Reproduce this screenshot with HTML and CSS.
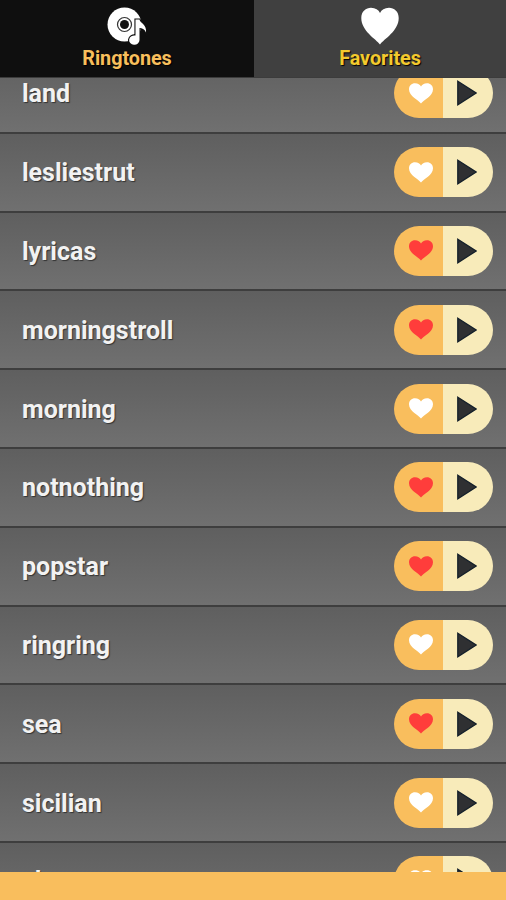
FILE: index.html
```html
<!DOCTYPE html>
<html lang="en">
<head>
<meta charset="utf-8">
<title>Ringtones</title>
<link rel="stylesheet" href="styles.css">
</head>
<body>
<svg width="0" height="0" class="defs">
  <symbol id="heart" viewBox="0 0 24 21"><path d="M12 20.500C9.500 17 0 13.500 0 6.300C0 2.600 2.600 .2 6 .2C9 .2 11 1.500 12 3.500C13 1.500 15 .2 18 .2C21.400 .2 24 2.600 24 6.300C24 13.500 14.500 17 12 20.500Z"/></symbol>
  <symbol id="play" viewBox="0 0 20 26"><path d="M.8 1.200L19 13L.8 24.800Z" fill="#2f3032" stroke="#15202a" stroke-width="1.300"/></symbol>
</svg>
<div class="app">
  <nav class="tabs">
    <div class="tab active">
      <svg class="disc" viewBox="0 0 40 38">
        <circle cx="17.500" cy="17.500" r="17" fill="#fff"/>
        <circle cx="17.500" cy="17.500" r="7" fill="none" stroke="#333" stroke-width="1.200"/>
        <circle cx="17.500" cy="17.500" r="4.500" fill="#111"/>
        <path d="M28.500 12.500H32.500C33 16 40 17.500 39 25.500C37.500 22 35 21 32.500 21V33A5.200 4.600 0 1 1 28.500 28.600Z" fill="#fff" stroke="#111" stroke-width="2.200" paint-order="stroke"/>
      </svg>
      <span>Ringtones</span>
    </div>
    <div class="tab favorites">
      <svg class="bigheart" viewBox="0 0 38 38"><path d="M19 37.500C15 32 .3 24 .3 11C.3 4.500 5 .8 10 .8C14.500 .8 17.500 3 19 6C20.500 3 23.500 .8 28 .8C33 .8 37.700 4.500 37.700 11C37.700 24 23 32 19 37.500Z" fill="#fff"/></svg>
      <span>Favorites</span>
    </div>
  </nav>
  <main class="viewport">
    <ul class="list">
      <li><span>land</span><div class="pill"><i><svg><use href="#heart"/></svg></i><b><svg><use href="#play"/></svg></b></div></li>
      <li><span>lesliestrut</span><div class="pill"><i><svg><use href="#heart"/></svg></i><b><svg><use href="#play"/></svg></b></div></li>
      <li><span>lyricas</span><div class="pill liked"><i><svg><use href="#heart"/></svg></i><b><svg><use href="#play"/></svg></b></div></li>
      <li><span>morningstroll</span><div class="pill liked"><i><svg><use href="#heart"/></svg></i><b><svg><use href="#play"/></svg></b></div></li>
      <li><span>morning</span><div class="pill"><i><svg><use href="#heart"/></svg></i><b><svg><use href="#play"/></svg></b></div></li>
      <li><span>notnothing</span><div class="pill liked"><i><svg><use href="#heart"/></svg></i><b><svg><use href="#play"/></svg></b></div></li>
      <li><span>popstar</span><div class="pill liked"><i><svg><use href="#heart"/></svg></i><b><svg><use href="#play"/></svg></b></div></li>
      <li><span>ringring</span><div class="pill"><i><svg><use href="#heart"/></svg></i><b><svg><use href="#play"/></svg></b></div></li>
      <li><span>sea</span><div class="pill liked"><i><svg><use href="#heart"/></svg></i><b><svg><use href="#play"/></svg></b></div></li>
      <li><span>sicilian</span><div class="pill"><i><svg><use href="#heart"/></svg></i><b><svg><use href="#play"/></svg></b></div></li>
      <li class="partial"><span>sl</span><div class="pill"><i><svg><use href="#heart"/></svg></i><b><svg><use href="#play"/></svg></b></div></li>
    </ul>
  </main>
  <footer class="banner"></footer>
</div>
</body>
</html>
```
FILE: styles.css
```css
* { box-sizing: border-box; }
body { margin: 0; font-family: Roboto, sans-serif; background: #666; }
.defs { display: none; }
.app { height: 900px; width: 506px; display: flex; flex-direction: column; overflow: hidden; }
.tabs { height: 78px; flex: none; display: grid; grid-template-columns: 254px 252px; border-bottom: 1px solid #3c3c3c; }
.tab { display: flex; flex-direction: column; align-items: center; background: #404040; padding-top: 7px; }
.tab.active { background: #0f0f0f; }
.tab span { font-weight: 700; font-size: 19.8px; line-height: 24px; color: #f8bf5c; text-shadow: 1px 1px 1px #000; letter-spacing: -.05px; }
.tab.favorites span { color: #f3ca2e; }
.disc { width: 40px; height: 38px; margin-bottom: 2px; }
.bigheart { width: 38px; height: 38px; margin-bottom: 2px; }
.viewport { flex: 1; min-height: 0; overflow: hidden; }
.list { list-style: none; margin: -23px 0 0; padding: 0; }
.list li { height: 78.800px; display: flex; align-items: center; justify-content: space-between; padding: 0 13px 0 22px; background: linear-gradient(#5f5f5f, #707070); border-bottom: 2px solid #3e3e3e; }
.list span { font-weight: 700; font-size: 25px; line-height: 30px; color: #f2f2f2; text-shadow: 1px 1px 1px #333; padding-top: 2px; }
.list .partial span { padding: 0; }
.list .partial .pill { margin-top: -1px; }
.pill { width: 99px; height: 50px; border-radius: 25px; overflow: hidden; display: grid; grid-template-columns: 49px 50px; }
.pill i, .pill b { display: flex; align-items: center; }
.pill i { background: #f9be5d; padding-left: 15px; }
.pill b { background: #f8ebba; padding-left: 14px; }
.pill i svg { width: 24px; height: 21px; fill: #fff; }
.pill.liked i svg { fill: #ff3d3b; }
.pill b svg { width: 20px; height: 26px; }
.banner { height: 28px; flex: none; background: #f9be5d; }
```
